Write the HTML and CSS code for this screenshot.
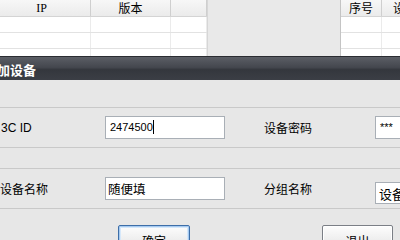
FILE: index.html
```html
<!DOCTYPE html>
<html>
<head>
  <meta charset="UTF-8">
  <title>添加设备</title>
  <link rel="stylesheet" href="styles.css">
</head>
<body>
  <!-- Window behind the dialog: device lists -->
  <div class="behind">
    <div class="grid grid-left">
      <div class="grid-head">
        <span class="cell c1">IP</span>
        <span class="cell c2">版本</span>
        <span class="cell c3"></span>
      </div>
      <div class="grid-row"><span class="cell c1"></span><span class="cell c2"></span><span class="cell c3"></span></div>
      <div class="grid-row"><span class="cell c1"></span><span class="cell c2"></span><span class="cell c3"></span></div>
      <div class="grid-row"><span class="cell c1"></span><span class="cell c2"></span><span class="cell c3"></span></div>
    </div>
    <div class="behind-gap"></div>
    <div class="grid grid-right">
      <div class="grid-head">
        <span class="cell r1">序号</span>
        <span class="cell r2">设备</span>
      </div>
      <div class="grid-row"><span class="cell r1"></span><span class="cell r2"></span></div>
      <div class="grid-row"><span class="cell r1"></span><span class="cell r2"></span></div>
      <div class="grid-row"><span class="cell r1"></span><span class="cell r2"></span></div>
    </div>
  </div>

  <!-- Add device dialog -->
  <div class="dialog">
    <div class="dialog-title"><span>添加设备</span></div>
    <div class="dialog-body">
      <div class="form-row">
        <span class="lbl">3C ID</span>
        <div class="field">2474500<span class="caret"></span></div>
        <span class="lbl lbl-right">设备密码</span>
        <div class="field field-cut">***</div>
      </div>
      <div class="form-row">
        <span class="lbl lbl-cn">设备名称</span>
        <div class="field field-cn">随便填</div>
        <span class="lbl lbl-right">分组名称</span>
        <div class="field field-cut field-combo">设备</div>
      </div>
      <div class="buttons">
        <button class="btn btn-default">确定</button>
        <button class="btn btn-exit">退出</button>
      </div>
    </div>
  </div>
</body>
</html>
```

FILE: styles.css
```css
body {
  margin: 0;
  width: 400px;
  height: 240px;
  overflow: hidden;
  background-color: #e7e7e7;
  font-family: "Liberation Sans", "Noto Sans CJK SC", sans-serif;
  font-size: 12px;
  color: #000;
}
/* Background window */
.behind {
  display: flex;
  height: 56px;
  background-color: #fff;
  overflow: hidden;
}
.behind > div {
  flex-shrink: 0;
}
.grid {
  box-sizing: border-box;
  background-color: #fff;
}
.grid-left {
  width: 215px;
  margin-left: -7px;
  border-right: 1px solid #d6d6d6;
}
.grid-right {
  width: 80px;
  border-left: 1px solid #c4c4c4;
}
.behind-gap {
  width: 132px;
  background-color: #e9e9e9;
}
.grid-head,
.grid-row {
  display: flex;
  box-sizing: border-box;
}
.grid-head {
  height: 17px;
  background: linear-gradient(#f7f7f7, #ebebeb);
  border-bottom: 1px solid #d4d4d4;
}
.grid-row {
  height: 16px;
  border-bottom: 1px solid #e2e2e2;
}
.cell {
  box-sizing: border-box;
  flex-shrink: 0;
  text-align: center;
  line-height: 16px;
  white-space: nowrap;
  overflow: hidden;
}
.grid-head .cell {
  border-right: 1px solid #cfcfcf;
}
.grid-row .cell {
  border-right: 1px solid #ebebeb;
}
.c1 { width: 98px; font-family: "Liberation Serif", serif; }
.c2 { width: 80px; font-family: "Noto Sans CJK SC", sans-serif; }
.c3 { flex: 1; }
.r1 { width: 41px; font-family: "Noto Sans CJK SC", sans-serif; }
.r2 { flex: 1; font-family: "Noto Sans CJK SC", sans-serif; text-align: left; padding-left: 11px; }
/* Dialog */
.dialog-title {
  height: 24px;
  line-height: 25px;
  background: linear-gradient(#5b5e65, #44474e 45%, #34373d 55%, #3b3e45);
  border-top: 1px solid #2a2c31;
  box-sizing: border-box;
  color: #fff;
  font-family: "Noto Sans CJK SC", sans-serif;
  font-weight: bold;
  font-size: 13px;
  white-space: nowrap;
  overflow: hidden;
}
.dialog-title span {
  margin-left: -16px;
}
.dialog-body {
  padding-top: 27px;
}
.form-row {
  display: flex;
  align-items: center;
  height: 41px;
  box-sizing: border-box;
  border-top: 1px solid #c9c9c9;
  border-bottom: 1px solid #c9c9c9;
  margin-bottom: 20px;
}
.form-row > * {
  flex-shrink: 0;
}
.lbl {
  width: 105px;
  padding-left: 1px;
  box-sizing: border-box;
  white-space: nowrap;
}
.lbl-cn,
.lbl-right {
  font-family: "Noto Sans CJK SC", sans-serif;
  padding-left: 0;
}
.lbl-right {
  width: 111px;
  margin-left: 39px;
}
.field {
  width: 120px;
  height: 23px;
  box-sizing: border-box;
  border: 1px solid #a9afb6;
  background-color: #fff;
  padding-left: 4px;
  line-height: 21px;
  font-size: 11px;
  white-space: nowrap;
  overflow: hidden;
}
.field-cn {
  font-family: "Noto Sans CJK SC", sans-serif;
  font-size: 12.5px;
  padding-left: 2px;
}
.field-cut {
  width: 40px;
}
.field-combo {
  font-family: "Noto Sans CJK SC", sans-serif;
  font-size: 13px;
  margin-top: 8px;
  height: 22px;
  padding-left: 3px;
}
.caret {
  display: inline-block;
  width: 1px;
  height: 14px;
  background-color: #000;
  vertical-align: -3px;
}
.buttons {
  display: flex;
  margin-top: -4px;
}
.btn {
  flex-shrink: 0;
  width: 72px;
  height: 28px;
  box-sizing: border-box;
  padding: 2px 0 0 0;
  border: 1px solid #7b7f86;
  border-radius: 2px;
  background: linear-gradient(#fdfdfd, #ececec 60%, #dedede);
  font-family: "Noto Sans CJK SC", sans-serif;
  font-size: 12px;
  color: #000;
  vertical-align: top;
}
.btn-default {
  margin-left: 118px;
  border-color: #3d6ea8;
  box-shadow: inset 0 0 0 1px #a6caf0, inset 0 0 0 2px #d6e8fa;
}
.btn-exit {
  width: 71px;
  margin-left: 132px;
  box-shadow: inset 0 0 0 1px #fff;
}
```
